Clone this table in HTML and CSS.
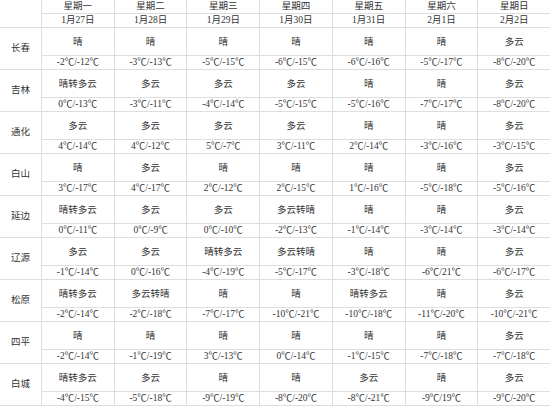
FILE: index.html
```html
<!DOCTYPE html>
<html lang="zh-CN">
<head>
<meta charset="utf-8">
<title>吉林天气预报</title>
<link rel="stylesheet" href="styles.css">
</head>
<body>
<div class="forecast">
  <div class="cell corner"></div>
  <div class="cell day">星期一</div><div class="cell day">星期二</div><div class="cell day">星期三</div><div class="cell day">星期四</div><div class="cell day">星期五</div><div class="cell day">星期六</div><div class="cell day">星期日</div>
  <div class="cell date">1月27日</div><div class="cell date">1月28日</div><div class="cell date">1月29日</div><div class="cell date">1月30日</div><div class="cell date">1月31日</div><div class="cell date">2月1日</div><div class="cell date">2月2日</div>

  <div class="cell city">长春</div>
  <div class="cell wx">晴</div><div class="cell wx">晴</div><div class="cell wx">晴</div><div class="cell wx">晴</div><div class="cell wx">晴</div><div class="cell wx">晴</div><div class="cell wx">多云</div>
  <div class="cell temp">-2℃/-12℃</div><div class="cell temp">-3℃/-13℃</div><div class="cell temp">-5℃/-15℃</div><div class="cell temp">-6℃/-15℃</div><div class="cell temp">-6℃/-16℃</div><div class="cell temp">-5℃/-17℃</div><div class="cell temp">-8℃/-20℃</div>

  <div class="cell city">吉林</div>
  <div class="cell wx">晴转多云</div><div class="cell wx">多云</div><div class="cell wx">多云</div><div class="cell wx">多云</div><div class="cell wx">晴</div><div class="cell wx">晴</div><div class="cell wx">多云</div>
  <div class="cell temp">0℃/-13℃</div><div class="cell temp">-3℃/-11℃</div><div class="cell temp">-4℃/-14℃</div><div class="cell temp">-5℃/-15℃</div><div class="cell temp">-5℃/-16℃</div><div class="cell temp">-7℃/-17℃</div><div class="cell temp">-8℃/-20℃</div>

  <div class="cell city">通化</div>
  <div class="cell wx">多云</div><div class="cell wx">多云</div><div class="cell wx">多云</div><div class="cell wx">多云</div><div class="cell wx">晴</div><div class="cell wx">晴</div><div class="cell wx">多云</div>
  <div class="cell temp">4℃/-14℃</div><div class="cell temp">4℃/-12℃</div><div class="cell temp">5℃/-7℃</div><div class="cell temp">3℃/-11℃</div><div class="cell temp">2℃/-14℃</div><div class="cell temp">-3℃/-16℃</div><div class="cell temp">-3℃/-15℃</div>

  <div class="cell city">白山</div>
  <div class="cell wx">晴</div><div class="cell wx">多云</div><div class="cell wx">晴</div><div class="cell wx">晴</div><div class="cell wx">晴</div><div class="cell wx">晴</div><div class="cell wx">多云</div>
  <div class="cell temp">3℃/-17℃</div><div class="cell temp">4℃/-17℃</div><div class="cell temp">2℃/-12℃</div><div class="cell temp">2℃/-15℃</div><div class="cell temp">1℃/-16℃</div><div class="cell temp">-5℃/-18℃</div><div class="cell temp">-5℃/-16℃</div>

  <div class="cell city">延边</div>
  <div class="cell wx">晴转多云</div><div class="cell wx">多云</div><div class="cell wx">多云</div><div class="cell wx">多云转晴</div><div class="cell wx">晴</div><div class="cell wx">晴</div><div class="cell wx">多云</div>
  <div class="cell temp">0℃/-11℃</div><div class="cell temp">0℃/-9℃</div><div class="cell temp">0℃/-10℃</div><div class="cell temp">-2℃/-13℃</div><div class="cell temp">-1℃/-14℃</div><div class="cell temp">-3℃/-14℃</div><div class="cell temp">-3℃/-14℃</div>

  <div class="cell city">辽源</div>
  <div class="cell wx">多云</div><div class="cell wx">多云</div><div class="cell wx">晴转多云</div><div class="cell wx">多云转晴</div><div class="cell wx">晴</div><div class="cell wx">晴</div><div class="cell wx">多云</div>
  <div class="cell temp">-1℃/-14℃</div><div class="cell temp">0℃/-16℃</div><div class="cell temp">-4℃/-19℃</div><div class="cell temp">-5℃/-17℃</div><div class="cell temp">-3℃/-18℃</div><div class="cell temp">-6℃/21℃</div><div class="cell temp">-6℃/-17℃</div>

  <div class="cell city">松原</div>
  <div class="cell wx">晴转多云</div><div class="cell wx">多云转晴</div><div class="cell wx">晴</div><div class="cell wx">晴</div><div class="cell wx">晴转多云</div><div class="cell wx">晴</div><div class="cell wx">多云</div>
  <div class="cell temp">-2℃/-14℃</div><div class="cell temp">-2℃/-18℃</div><div class="cell temp">-7℃/-17℃</div><div class="cell temp">-10℃/-21℃</div><div class="cell temp">-10℃/-18℃</div><div class="cell temp">-11℃/-20℃</div><div class="cell temp">-10℃/-21℃</div>

  <div class="cell city">四平</div>
  <div class="cell wx">晴</div><div class="cell wx">晴</div><div class="cell wx">晴</div><div class="cell wx">晴</div><div class="cell wx">晴</div><div class="cell wx">晴</div><div class="cell wx">多云</div>
  <div class="cell temp">-2℃/-14℃</div><div class="cell temp">-1℃/-19℃</div><div class="cell temp">3℃/-13℃</div><div class="cell temp">0℃/-14℃</div><div class="cell temp">-1℃/-15℃</div><div class="cell temp">-7℃/-18℃</div><div class="cell temp">-7℃/-18℃</div>

  <div class="cell city">白城</div>
  <div class="cell wx">晴转多云</div><div class="cell wx">多云</div><div class="cell wx">晴</div><div class="cell wx">晴</div><div class="cell wx">多云</div><div class="cell wx">晴</div><div class="cell wx">多云</div>
  <div class="cell temp">-4℃/-15℃</div><div class="cell temp">-5℃/-18℃</div><div class="cell temp">-9℃/-19℃</div><div class="cell temp">-8℃/-20℃</div><div class="cell temp">-8℃/-21℃</div><div class="cell temp">-9℃/19℃</div><div class="cell temp">-9℃/-20℃</div>
</div>
</body>
</html>
```

FILE: styles.css
```css
html, body {
  margin: 0;
  padding: 0;
  background: #ffffff;
}

.forecast {
  width: 550px;
  display: grid;
  grid-template-columns: 41px repeat(7, 1fr);
  grid-template-rows: 13px 13px repeat(9, 27px 13px);
  gap: 1px;
  background: #dedede;
  border-bottom: 1px solid #dedede;
  font-family: "Liberation Serif", "Noto Sans CJK SC", serif;
  font-size: 9.5px;
  color: #333333;
}

.cell {
  background: #ffffff;
  display: flex;
  align-items: center;
  justify-content: center;
  white-space: nowrap;
  line-height: 1;
}

.corner,
.city {
  grid-row: span 2;
}

.day,
.date {
  padding-top: 1px;
}

.wx {
  padding-top: 2px;
}
```
